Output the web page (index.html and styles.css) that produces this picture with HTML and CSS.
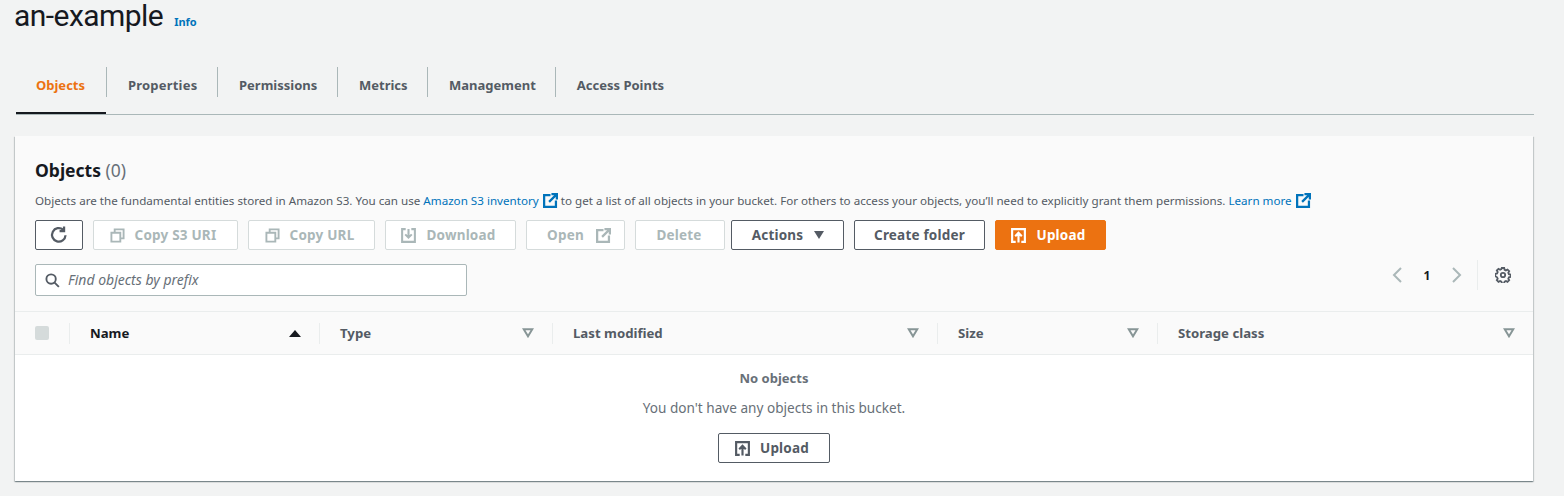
FILE: index.html
```html
<!DOCTYPE html>
<html lang="en">
<head>
<meta charset="utf-8">
<title>an-example</title>
<link rel="stylesheet" href="styles.css">
</head>
<body>
<svg class="sprite" width="0" height="0" aria-hidden="true">
  <defs>
    <symbol id="copy" viewBox="0 0 16 16"><path d="M5 5V1.500h9.500V11H11M1.500 5H11v9.500H1.500z" fill="none" stroke="currentColor" stroke-width="2"/></symbol>
    <symbol id="download" viewBox="0 0 16 16"><path d="M5 1.200H1.200v13.600h13.600V1.200H11M8 1v9M4.500 6.800 8 10.300l3.500-3.500" fill="none" stroke="currentColor" stroke-width="2.200"/></symbol>
    <symbol id="upload" viewBox="0 0 16 16"><path d="M5 14.800H1.200V1.200h13.600v13.600H11M8 15.500V5.500M4.500 8.700 8 5.200l3.500 3.500" fill="none" stroke="currentColor" stroke-width="2.300"/></symbol>
    <symbol id="external" viewBox="0 0 16 16"><path d="M8 2.200H1.200v12.600h12.600V8M9 1.200h5.800V7M14.800 1.200 6.500 9.500" fill="none" stroke="currentColor" stroke-width="2.400"/></symbol>
    <symbol id="sort" viewBox="0 0 12 10"><path d="M1.700 1.200h8.600L6 8.300z" fill="none" stroke="currentColor" stroke-width="2"/></symbol>
  </defs>
</svg>
<header class="title-row">
  <h1 class="title">an-example</h1>
  <a class="info" href="#">Info</a>
</header>
<nav class="tabs">
  <a class="tab tab-active" href="#">Objects</a>
  <a class="tab tab-props" href="#">Properties</a>
  <a class="tab tab-perms" href="#">Permissions</a>
  <a class="tab tab-metrics" href="#">Metrics</a>
  <a class="tab" href="#">Management</a>
  <a class="tab" href="#">Access Points</a>
</nav>
<main class="panel">
  <section class="panel-head">
    <h2 class="panel-title">Objects <span class="count">(0)</span></h2>
    <p class="desc">Objects are the fundamental entities stored in Amazon S3. You can use <a href="#">Amazon S3 inventory <svg class="ext"><use href="#external"/></svg></a> to get a list of all objects in your bucket. For others to access your objects, you’ll need to explicitly grant them permissions. <a href="#">Learn more <svg class="ext"><use href="#external"/></svg></a></p>
    <div class="toolbar">
      <button class="btn btn-refresh" aria-label="Refresh">
        <svg class="icon-refresh" viewBox="0 0 16 16"><path d="M13.800 8.200A6 6 0 1 1 11.700 3.300" fill="none" stroke="currentColor" stroke-width="2"/><path d="M12.500.500v4h-4" fill="none" stroke="currentColor" stroke-width="2"/></svg>
      </button>
      <button class="btn btn-off w-s3"><svg class="ico"><use href="#copy"/></svg>Copy S3 URI</button>
      <button class="btn btn-off w-url"><svg class="ico"><use href="#copy"/></svg>Copy URL</button>
      <button class="btn btn-off w-dl"><svg class="ico"><use href="#download"/></svg>Download</button>
      <button class="btn btn-off w-open">Open<svg class="ico ico-after"><use href="#external"/></svg></button>
      <button class="btn btn-off w-del">Delete</button>
      <button class="btn w-act">Actions<span class="caret"></span></button>
      <button class="btn w-folder">Create folder</button>
      <button class="btn btn-primary w-up"><svg class="ico"><use href="#upload"/></svg>Upload</button>
    </div>
    <div class="filter-row">
      <label class="search">
        <svg class="search-ico" viewBox="0 0 16 16"><circle cx="6.500" cy="6.500" r="5" fill="none" stroke="currentColor" stroke-width="2"/><path d="m10.200 10.200 4.600 4.600" stroke="currentColor" stroke-width="2"/></svg>
        <input class="search-input" type="text" placeholder="Find objects by prefix">
      </label>
      <div class="pager">
        <svg class="chev" viewBox="0 0 10 16"><path d="M8.500 1 1.500 8l7 7" fill="none" stroke="currentColor" stroke-width="2"/></svg>
        <span class="page-num">1</span>
        <svg class="chev" viewBox="0 0 10 16"><path d="m1.500 1 7 7-7 7" fill="none" stroke="currentColor" stroke-width="2"/></svg>
        <span class="pager-sep"></span>
        <svg class="gear" viewBox="0 0 16 16"><circle cx="8" cy="8" r="2.200" fill="none" stroke="currentColor" stroke-width="1.800"/><path d="M6.800 1h2.400l.4 1.800 1.300.6 1.600-.9 1.700 1.700-.9 1.600.6 1.300 1.800.4v2.400l-1.800.4-.6 1.300.9 1.600-1.700 1.700-1.600-.9-1.300.6-.4 1.800H6.800l-.4-1.800-1.300-.6-1.600.9-1.700-1.700.9-1.600-.6-1.300L.3 9.200V6.800l1.800-.4.600-1.300-.9-1.600 1.700-1.700 1.600.9 1.300-.6z" fill="none" stroke="currentColor" stroke-width="1.800"/></svg>
      </div>
    </div>
  </section>
  <div class="thead">
    <div class="th th-check"><span class="checkbox"></span></div>
    <div class="th th-name"><span>Name</span><span class="sort-up"></span></div>
    <div class="th"><span>Type</span><svg class="sort"><use href="#sort"/></svg></div>
    <div class="th"><span>Last modified</span><svg class="sort"><use href="#sort"/></svg></div>
    <div class="th"><span>Size</span><svg class="sort"><use href="#sort"/></svg></div>
    <div class="th"><span>Storage class</span><svg class="sort"><use href="#sort"/></svg></div>
  </div>
  <section class="empty">
    <strong class="empty-title">No objects</strong>
    <p class="empty-text">You don't have any objects in this bucket.</p>
    <button class="btn w-up2"><svg class="ico"><use href="#upload"/></svg>Upload</button>
  </section>
</main>
</body>
</html>
```
FILE: styles.css
```css
* { box-sizing: border-box; }
html, body { margin: 0; height: 496px; overflow: hidden; }
body { background: #f2f3f3; color: #16191f; font-family: "Noto Sans", sans-serif; font-size: 14px; }
a { color: #0073bb; text-decoration: none; }
.sprite { position: absolute; }

.title-row { display: flex; align-items: baseline; height: 33px; padding-left: 14px; gap: 11px; }
.title { margin: 0; font-family: Roboto, sans-serif; font-size: 30px; font-weight: 400; line-height: 32px; letter-spacing: -.55px; }
.info { font-size: 11px; font-weight: 700; }

.tabs { display: flex; height: 59px; margin: 23px 30px 0 16px; border-bottom: 1px solid #aab7b8; }
.tab { display: flex; align-items: center; height: 58px; padding: 0 20px; font-size: 13px; font-weight: 700; color: #545b64; position: relative; }
.tab + .tab { padding-left: 22px; padding-right: 19px; }
.tab + .tab::before { content: ""; position: absolute; left: 0; top: 11px; height: 30px; width: 1px; background: #aab7b8; }
.tab-active { color: #ec7211; width: 90px; border-bottom: 2px solid #16191f; padding-top: 2px; }
.tab-props { width: 111px; letter-spacing: .2px; }
.tab-perms { width: 120px; }
.tab-metrics { width: 90px; }

.panel { margin: 21px 31px 0 15px; height: 345px; background: #fff; box-shadow: 0 1px 1px 0 rgba(0,28,36,.3), 1px 1px 1px 0 rgba(0,28,36,.15), -1px 1px 1px 0 rgba(0,28,36,.15); display: flex; flex-direction: column; }
.panel-head { background: #fafafa; height: 176px; padding: 22px 20px 0; border-bottom: 1px solid #eaeded; }
.panel-title { margin: 0; font-size: 17.500px; line-height: 24px; font-weight: 700; }
.count { font-weight: 400; color: #687078; }
.desc { margin: 10px 0 0; height: 18px; font-size: 11.630px; line-height: 18px; color: #545b64; white-space: nowrap; display: block; }
.ext { width: 15px; height: 15px; vertical-align: -3px; margin-left: 1px; color: #0073bb; }

.toolbar { display: flex; gap: 10px; margin-top: 10px; }
.btn { display: inline-flex; align-items: center; justify-content: center; height: 30px; padding: 0; border: 1px solid #545b64; border-radius: 2px; background: #fff; color: #545b64; font: 700 13.500px "Noto Sans", sans-serif; letter-spacing: .2px; }
.ico { width: 15px; height: 15px; margin-right: 10px; color: currentColor; }
.ico-after { margin: 0 0 0 12px; }
.btn-off { border-color: #d5dbdb; color: #aab7b8; }
.btn-primary { background: #ec7211; border-color: #ec7211; color: #fff; }
.btn-refresh { width: 48px; }
.icon-refresh { width: 18px; height: 18px; }
.w-s3 { width: 145px; padding-right: 5px; }
.w-url { width: 127px; padding-right: 4px; }
.w-dl { width: 131px; padding-right: 4px; }
.w-open { width: 99px; padding-left: 7px; }
.w-del { width: 90px; margin-right: -4px; padding-right: 2px; }
.w-act { width: 113px; padding-left: 1px; }
.w-folder { width: 131px; }
.w-up { width: 111px; padding-right: 4px; }
.w-up2 { width: 112px; padding-right: 4px; }
.caret { width: 0; height: 0; margin-left: 11px; border: 5.500px solid transparent; border-top: 8px solid #545b64; border-bottom: 0; }

.filter-row { display: flex; justify-content: space-between; margin-top: 14px; }
.search { display: flex; align-items: center; width: 432px; height: 32px; padding-left: 9px; background: #fff; border: 1px solid #aab7b8; border-radius: 2px; color: #545b64; }
.search-ico { width: 15px; height: 15px; flex: none; }
.search-input { flex: 1; min-width: 0; height: 28px; margin-left: 8px; padding: 0 0 2px; border: 0; outline: 0; background: transparent; font: italic 400 14px "Noto Sans", sans-serif; }
.search-input::placeholder { color: #687078; opacity: 1; }
.pager { display: flex; align-items: center; height: 32px; margin-top: -5px; padding-right: 2px; }
.chev { width: 11px; height: 16px; color: #aab7b8; }
.page-num { width: 48px; text-align: center; font-size: 12px; font-weight: 700; }
.pager-sep { width: 1px; height: 30px; margin: 0 17px 0 15px; background: #eaeded; }
.gear { width: 16px; height: 16px; color: #545b64; }

.thead { display: grid; grid-template-columns: 54px 250px 233px 385px 220px 1fr; height: 43px; background: #fafafa; border-bottom: 1px solid #eaeded; align-items: center; }
.th { display: flex; align-items: center; justify-content: space-between; height: 21px; padding: 0 18px 0 20px; font-size: 13.200px; font-weight: 700; color: #545b64; border-left: 1px solid #eaeded; }
.th-check { border-left: 0; padding: 0 0 0 20px; justify-content: flex-start; }
.th-name { color: #16191f; }
.checkbox { width: 14px; height: 14px; background: #d5dbdb; border-radius: 2px; }
.sort-up { width: 0; height: 0; border: 6px solid transparent; border-bottom: 7px solid #16191f; border-top: 0; }
.sort { width: 12px; height: 10px; color: #879596; }

.empty { display: flex; flex-direction: column; align-items: center; padding-top: 14px; color: #687078; }
.empty-title { font-size: 13px; line-height: 18px; font-weight: 700; }
.empty-text { margin: 12px 0 0; font-size: 13.600px; line-height: 18px; }
.empty .btn { margin-top: 16px; }
```
